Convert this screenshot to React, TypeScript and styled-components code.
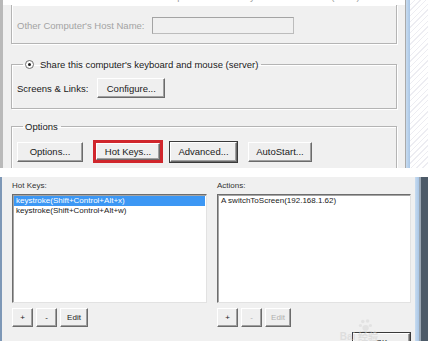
import React, { FunctionComponent } from 'react';
import styled, { createGlobalStyle, css } from 'styled-components';

const GlobalStyle = createGlobalStyle`
  html, body {
    margin: 0;
    padding: 0;
    background: #ffffff;
  }
  body {
    font-family: 'Liberation Sans', Arial, sans-serif;
  }
`;

const hotKeys = ['keystroke(Shift+Control+Alt+x)', 'keystroke(Shift+Control+Alt+w)'];
const actions = ['A switchToScreen(192.168.1.62)'];

const App: FunctionComponent<{}> = () => {
  return (
    <Root>
      <GlobalStyle />

      <TopShot>
        <WindowEdge />
        <Dialog>
          <TopClip>
            <ClippedText>Use another computer's shared keyboard and mouse (client)</ClippedText>
          </TopClip>

          <CutGroup>
            <Row>
              <Label disabled>Other Computer's Host Name:</Label>
              <TextInput disabled />
            </Row>
          </CutGroup>

          <Group $top={14}>
            <Legend $indent={6}>
              <Radio />
              <span>Share this computer's keyboard and mouse (server)</span>
            </Legend>
            <Row>
              <Label>Screens &amp; Links:</Label>
              <Button $width={68} $offset={9}>Configure...</Button>
            </Row>
          </Group>

          <Group $top={11}>
            <Legend $indent={6}>Options</Legend>
            <ButtonRow>
              <Button $width={66}>Options...</Button>
              <Highlight>
                <Button $width={64}>Hot Keys...</Button>
              </Highlight>
              <Button $width={67} $focused>Advanced...</Button>
              <Button $width={64} $offset={4}>AutoStart...</Button>
            </ButtonRow>
          </Group>
        </Dialog>
        <TopRightEdge>
          <EdgeLine />
          <EdgeGlow />
          <Hatch />
        </TopRightEdge>
      </TopShot>

      <Separator />

      <BottomShot>
        <BlueEdge />
        <Panel>
          <Column>
            <SmallLabel>Hot Keys:</SmallLabel>
            <ListBox>
              {hotKeys.map((item, i) => (
                <ListItem key={item} $selected={i === 0}>
                  {item}
                </ListItem>
              ))}
            </ListBox>
            <SmallButtonRow>
              <SmallButton $width={21}>+</SmallButton>
              <SmallButton $width={21}>-</SmallButton>
              <SmallButton $width={28}>Edit</SmallButton>
            </SmallButtonRow>
          </Column>

          <Column>
            <SmallLabel>Actions:</SmallLabel>
            <ListBox>
              {actions.map((item) => (
                <ListItem key={item}>{item}</ListItem>
              ))}
            </ListBox>
            <SmallButtonRow>
              <SmallButton $width={21}>+</SmallButton>
              <SmallButton $width={21} disabled>
                -
              </SmallButton>
              <SmallButton $width={26} disabled>
                Edit
              </SmallButton>
            </SmallButtonRow>
            <DialogFooter>
              <SmallButton $width={57} $focused>
                OK
              </SmallButton>
            </DialogFooter>
          </Column>
        </Panel>
        <BottomRightEdge>
          <EdgeGlow />
          <EdgeDark />
        </BottomRightEdge>

        <Watermark>
          <Paw viewBox="0 0 20 16">
            <circle cx="6" cy="3" r="2.2" />
            <circle cx="12" cy="2.5" r="2.2" />
            <circle cx="3" cy="8" r="2" />
            <circle cx="15.5" cy="8" r="2" />
            <ellipse cx="9.5" cy="11" rx="4" ry="3.5" />
          </Paw>
          <WatermarkText>Bai 经验</WatermarkText>
        </Watermark>
      </BottomShot>
    </Root>
  );
};

const Root = styled.div`
  width: 428px;
  height: 341px;
  overflow: hidden;
  display: flex;
  flex-direction: column;
  background: #ffffff;
`;

/* ---------- top screenshot ---------- */

const TopShot = styled.div`
  display: flex;
  height: 168px;
  overflow: hidden;
  flex-shrink: 0;
`;

const WindowEdge = styled.div`
  width: 3px;
  background: #b9b9b9;
  flex-shrink: 0;
`;

const Dialog = styled.div`
  flex: 1;
  display: flex;
  flex-direction: column;
  padding: 0 8px;
  background: #f0f0f0;
  font-size: 9.5px;
  color: #1a1a1a;

  & > * {
    flex-shrink: 0;
  }
`;

// the line above is cut off by the screenshot, only its descenders show
const TopClip = styled.div`
  height: 5px;
  margin: 0 -8px;
  padding-left: 102px;
  background: #ffffff;
  overflow: hidden;
  display: flex;
  flex-direction: column;
  justify-content: flex-end;
`;

const ClippedText = styled.div`
  line-height: 12px;
  white-space: nowrap;
  color: #9a9a9a;
  flex-shrink: 0;
  margin-bottom: 2px;
`;

const groupBorder = css`
  border: 1px solid #b4b4b4;
  box-shadow: 1px 1px 0 #ffffff, inset 1px 1px 0 #ffffff;
`;

const CutGroup = styled.div`
  ${groupBorder};
  border-top: none;
  padding: 12px 5px 9px;
`;

const Group = styled.fieldset<{ $top: number }>`
  ${groupBorder};
  margin: ${(p) => p.$top}px 0 0;
  padding: 7px 5px 10px;
  min-width: 0;
`;

const Legend = styled.legend<{ $indent: number }>`
  display: flex;
  align-items: center;
  gap: 6px;
  margin-left: ${(p) => p.$indent}px;
  padding: 0 3px 0 2px;
  line-height: 13px;
  white-space: nowrap;
`;

const Radio = styled.span`
  position: relative;
  width: 9px;
  height: 9px;
  border-radius: 50%;
  border: 1px solid #6f6f6f;
  background: #ffffff;
  box-sizing: border-box;

  &::after {
    content: '';
    position: absolute;
    left: 2px;
    top: 2px;
    width: 3px;
    height: 3px;
    border-radius: 50%;
    background: #1c1c1c;
  }
`;

const Row = styled.div`
  display: flex;
  align-items: center;
`;

const Label = styled.span<{ disabled?: boolean }>`
  white-space: nowrap;
  color: ${(p) => (p.disabled ? '#a3a3a3' : '#1a1a1a')};
`;

const TextInput = styled.input`
  width: 142px;
  height: 17px;
  margin-left: 8px;
  box-sizing: border-box;
  border: 1px solid #bcbcbc;
  border-top-color: #a4a4a4;
  border-left-color: #a4a4a4;
  background: #f0f0f0;
  padding: 0;
`;

const ButtonRow = styled.div`
  display: flex;
  align-items: center;
  gap: 7px;
`;

const Button = styled.button<{ $width: number; $offset?: number; $focused?: boolean }>`
  width: ${(p) => p.$width}px;
  height: 20px;
  margin-left: ${(p) => p.$offset ?? 0}px;
  padding: 0;
  box-sizing: border-box;
  font-family: inherit;
  font-size: 9.5px;
  color: #1a1a1a;
  background: #efefef;
  border: 1px solid;
  border-color: #ffffff #6b6b6b #6b6b6b #ffffff;
  box-shadow: inset -1px -1px 0 #a0a0a0;
  ${(p) =>
    p.$focused &&
    css`
      outline: 1px solid #3a3a3a;
      outline-offset: 0;
    `}
`;

const Highlight = styled.div`
  display: flex;
  margin: 0 0 0 3px;
  border: 3px solid #d0262c;
  height: 23px;
  box-sizing: border-box;
  align-items: center;

  & > button {
    height: 17px;
  }
`;

const TopRightEdge = styled.div`
  display: flex;
  width: 23px;
  flex-shrink: 0;
`;

const EdgeLine = styled.div`
  width: 1px;
  background: #a9a9a9;
`;

const EdgeGlow = styled.div`
  width: 4px;
  background: linear-gradient(90deg, #c8dcf0, #a9c6e6);
`;

const Hatch = styled.div`
  flex: 1;
  background: repeating-linear-gradient(135deg, #ffffff 0 3px, #ededf2 3px 4px);
`;

const Separator = styled.div`
  height: 9px;
  background: #ffffff;
  flex-shrink: 0;
`;

/* ---------- bottom screenshot ---------- */

const BottomShot = styled.div`
  position: relative;
  flex: 1;
  display: flex;
  overflow: hidden;
`;

const BlueEdge = styled.div`
  width: 2px;
  background: #7d97b6;
  flex-shrink: 0;
`;

const Panel = styled.div`
  flex: 1;
  display: grid;
  grid-template-columns: 195px 194px;
  column-gap: 10px;
  padding: 3px 4px 0 10px;
  background: #f0f0f0;
  font-size: 8px;
  color: #1a1a1a;
`;

const Column = styled.div`
  display: flex;
  flex-direction: column;

  & > * {
    flex-shrink: 0;
  }
`;

const SmallLabel = styled.div`
  line-height: 12px;
  margin-bottom: 2px;
  color: #333;
`;

const ListBox = styled.div`
  height: 109px;
  box-sizing: border-box;
  background: #ffffff;
  border: 1px solid;
  border-color: #6d6d6d #e2e2e2 #e2e2e2 #6d6d6d;
  box-shadow: inset 1px 1px 0 #a5a5a5;
  padding: 1px 1px;
`;

const ListItem = styled.div<{ $selected?: boolean }>`
  line-height: 10px;
  padding-left: 2px;
  white-space: nowrap;
  color: ${(p) => (p.$selected ? '#ffffff' : '#1a1a1a')};
  background: ${(p) => (p.$selected ? '#3c97f4' : 'transparent')};
`;

const SmallButtonRow = styled.div`
  display: flex;
  gap: 3px;
  margin-top: 5px;
`;

const SmallButton = styled.button<{ $width: number; $focused?: boolean }>`
  width: ${(p) => p.$width}px;
  height: 19px;
  padding: 0;
  box-sizing: border-box;
  font-family: inherit;
  font-size: 8px;
  color: #1a1a1a;
  background: #efefef;
  border: 1px solid;
  border-color: #ffffff #6b6b6b #6b6b6b #ffffff;
  box-shadow: inset -1px -1px 0 #a0a0a0;

  &:disabled {
    color: #b0b0b0;
  }

  ${(p) =>
    p.$focused &&
    css`
      outline: 1px solid #3a3a3a;
    `}
`;

const DialogFooter = styled.div`
  display: flex;
  justify-content: flex-end;
  margin-top: 6px;
  padding-right: 1px;
`;

const BottomRightEdge = styled.div`
  display: flex;
  width: 13px;
  flex-shrink: 0;
`;

const EdgeDark = styled.div`
  flex: 1;
  background: linear-gradient(90deg, #9aa6b2 0 2px, #4d5b69 2px);
`;

const Watermark = styled.div`
  position: absolute;
  right: 50px;
  bottom: -1px;
  display: flex;
  flex-direction: column;
  align-items: center;
  opacity: 0.55;
  pointer-events: none;
`;

const Paw = styled.svg`
  width: 16px;
  height: 13px;
  fill: #d8d8d8;
  margin-left: 14px;
`;

const WatermarkText = styled.div`
  font-family: 'Liberation Sans', 'Noto Sans CJK SC', sans-serif;
  font-size: 10px;
  font-weight: bold;
  color: #d0d0d0;
  line-height: 10px;
  white-space: nowrap;
`;

export default App;
